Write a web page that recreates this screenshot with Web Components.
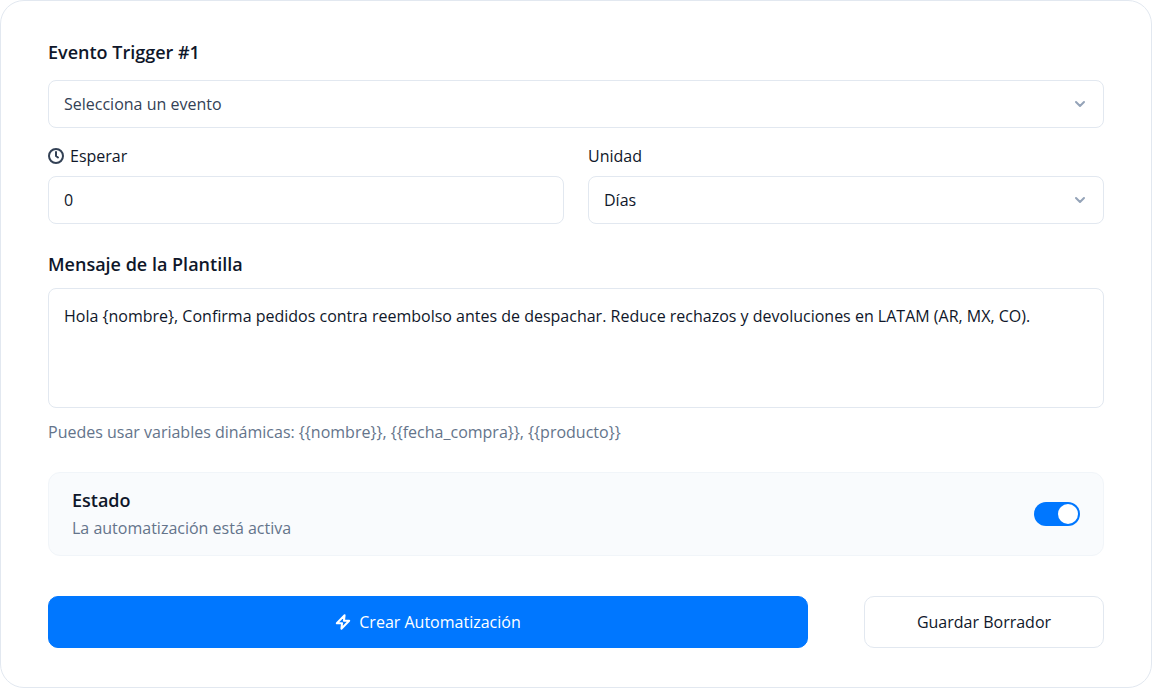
<!DOCTYPE html>
<html lang="es">
<head>
<meta charset="utf-8">
<meta name="viewport" content="width=device-width, initial-scale=1">
<title>Automatización</title>
<style>
  body {
    margin: 0;
    background: #fff;
    color: #0f172a;
    font: 400 16px/24px "Open Sans", "Noto Sans", sans-serif;
  }
</style>
</head>
<body>
<automation-form></automation-form>

<script>
const base = `
  *, *::before, *::after { box-sizing: border-box; }
  :host { display: block; min-width: 0; }
  :host([hidden]) { display: none; }
`;

const fieldStyles = `
  ${base}
  label { display: flex; align-items: center; gap: 6px; margin-bottom: 8px; }
  :host([heading]) label { font-size: 18px; line-height: 24px; font-weight: 600; margin-bottom: var(--heading-gap, 12px); }
  input, select, textarea {
    display: block;
    width: 100%;
    margin: 0;
    padding: 0 15px;
    height: 48px;
    border: 1px solid #e2e8f0;
    border-radius: 8px;
    background: #fff;
    color: inherit;
    font: inherit;
    outline: none;
    appearance: none;
  }
  input:focus-visible, select:focus-visible, textarea:focus-visible { border-color: #0077ff; }
`;

function define(name, markup, setup) {
  const template = document.createElement('template');
  template.innerHTML = markup;
  customElements.define(name, class extends HTMLElement {
    constructor() {
      super();
      this.attachShadow({ mode: 'open' }).append(template.content.cloneNode(true));
    }
    connectedCallback() {
      if (setup) setup(this, this.shadowRoot);
    }
  });
}

define('clock-icon', `
  <style>${base} :host { flex: none; color: #334155; } svg { display: block; }</style>
  <svg width="16" height="16" viewBox="0 0 16 16" fill="none" stroke="currentColor" stroke-width="2" stroke-linecap="round" stroke-linejoin="round" aria-hidden="true">
    <circle cx="8" cy="8" r="7"/><path d="M8 4v4l2 1.5"/>
  </svg>`);

define('bolt-icon', `
  <style>${base} :host { flex: none; } svg { display: block; }</style>
  <svg width="16" height="16" viewBox="0 0 16 16" fill="none" stroke="currentColor" stroke-width="2" stroke-linejoin="round" aria-hidden="true">
    <path d="M9.6 1.3 1.8 9.2h5.3L6.4 14.7l7.8-7.9H8.9Z"/>
  </svg>`);

define('text-field', `
  <style>${fieldStyles}</style>
  <label for="control"><slot name="icon"></slot><slot></slot></label>
  <input id="control" type="text" inputmode="numeric">`,
  (host, root) => { root.querySelector('input').value = host.getAttribute('value') || ''; });

define('select-field', `
  <style>
    ${fieldStyles}
    .box { position: relative; }
    select { padding-right: 40px; }
    :host([placeholder]) select { color: #334155; }
    svg { position: absolute; right: 16px; top: 16px; pointer-events: none; color: #94a3b8; }
  </style>
  <label for="control"><slot></slot></label>
  <div class="box">
    <select id="control"></select>
    <svg width="16" height="16" viewBox="0 0 16 16" fill="none" stroke="currentColor" stroke-width="2" stroke-linecap="round" stroke-linejoin="round" aria-hidden="true"><path d="m4 6 4 4 4-4"/></svg>
  </div>`,
  (host, root) => {
    root.querySelector('select').replaceChildren(
      ...host.getAttribute('options').split('|').map(text => new Option(text)));
  });

define('message-field', `
  <style>
    ${fieldStyles}
    textarea { height: 120px; padding: 15px; resize: none; }
    p { margin: 12px 0 0; color: #64748b; }
  </style>
  <label for="control"><slot></slot></label>
  <textarea id="control" aria-describedby="hint"></textarea>
  <p id="hint"><slot name="hint"></slot></p>`,
  (host, root) => { root.querySelector('textarea').value = host.getAttribute('value') || ''; });

define('status-card', `
  <style>
    ${base}
    :host {
      display: flex; align-items: center; justify-content: space-between; gap: 24px;
      padding: 15px 23px; border: 1px solid #f1f5f9; border-radius: 12px; background: #f9fbfd;
    }
    label { display: block; font-size: 18px; line-height: 24px; font-weight: 600; }
    p { margin: 4px 0 0; color: #64748b; }
    input {
      appearance: none; flex: none; display: flex; width: 46px; height: 24px; margin: 0;
      padding: 2px; border-radius: 12px; background: #cbd5e1; cursor: pointer;
    }
    input::before { content: ""; width: 20px; height: 20px; border-radius: 50%; background: #fff; }
    input:checked { background: #0077ff; justify-content: flex-end; }
  </style>
  <div>
    <label for="control"><slot></slot></label>
    <p id="hint"><slot name="hint"></slot></p>
  </div>
  <input id="control" type="checkbox" role="switch" aria-describedby="hint" checked>`);

define('action-button', `
  <style>
    ${base}
    button {
      display: flex; align-items: center; justify-content: center; gap: 8px;
      width: 100%; height: 52px; margin: 0; padding: 0 16px;
      border: 1px solid #e2e8f0; border-radius: 10px;
      background: #fff; color: inherit; font: inherit; cursor: pointer;
    }
    :host([primary]) button { background: #0077ff; border-color: #0077ff; color: #fff; }
  </style>
  <button type="button"><slot name="icon"></slot><slot></slot></button>`);

define('automation-form', `
  <style>
    ${base}
    form {
      min-height: 100vh; padding: 39px 47px;
      border: 1px solid #e2e8f0; border-radius: 24px; background: #fff;
    }
    .trigger { --heading-gap: 16px; }
    .row { display: grid; grid-template-columns: 1fr 1fr; gap: 24px; margin: 16px 0 28px; }
    status-card { margin: 28px 0 40px; }
    .actions { display: grid; grid-template-columns: 1fr 240px; gap: 56px; }
  </style>
  <form>
    <select-field class="trigger" heading placeholder options="Selecciona un evento">Evento Trigger #1</select-field>
    <div class="row">
      <text-field value="0"><clock-icon slot="icon"></clock-icon>Esperar</text-field>
      <select-field options="Días|Horas|Minutos">Unidad</select-field>
    </div>
    <message-field heading value="Hola {nombre}, Confirma pedidos contra reembolso antes de despachar. Reduce rechazos y devoluciones en LATAM (AR, MX, CO).">
      Mensaje de la Plantilla
      <span slot="hint">Puedes usar variables dinámicas: {{nombre}}, {{fecha_compra}}, {{producto}}</span>
    </message-field>
    <status-card>Estado<span slot="hint">La automatización está activa</span></status-card>
    <div class="actions">
      <action-button primary><bolt-icon slot="icon"></bolt-icon>Crear Automatización</action-button>
      <action-button>Guardar Borrador</action-button>
    </div>
  </form>`);
</script>
</body>
</html>
